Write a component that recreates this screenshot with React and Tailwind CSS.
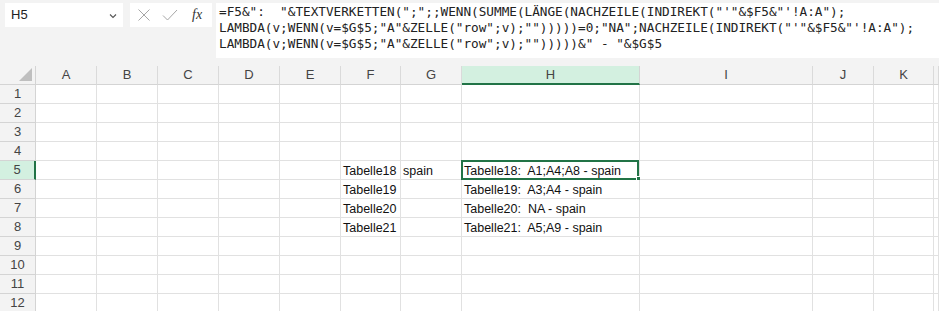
import React from "react";

const cols = ["A", "B", "C", "D", "E", "F", "G", "H", "I", "J", "K", ""];

const cells = {
  "F5": "Tabelle18",
  "G5": "spain",
  "H5": "Tabelle18:  A1;A4;A8 - spain",
  "F6": "Tabelle19",
  "H6": "Tabelle19:  A3;A4 - spain",
  "F7": "Tabelle20",
  "H7": "Tabelle20:  NA - spain",
  "F8": "Tabelle21",
  "H8": "Tabelle21:  A5;A9 - spain",
};

const FormulaBar = () => (
  <div className="h-[66px] bg-[#f3f3f3] flex items-start pt-[3px]">
    <div className="ml-[5px] w-[118px] h-[24px] bg-white flex items-center justify-between pl-[6px] pr-[6px] text-[13px] text-[#222]">
      <span>H5</span>
      <svg width="8" height="6" viewBox="0 0 8 6" className="mt-[1px]">
        <path d="M1 1.5 L4 4.5 L7 1.5" fill="none" stroke="#555" strokeWidth="1.1" />
      </svg>
    </div>
    <div className="ml-[7px] w-[82px] h-[24px] bg-white flex items-center pl-[7px]">
      <svg width="14" height="14" viewBox="0 0 14 14">
        <path d="M1.5 1.5 L12.5 12.5 M12.5 1.5 L1.5 12.5" stroke="#a6a6a6" strokeWidth="1" />
      </svg>
      <svg width="16" height="14" viewBox="0 0 16 14" className="ml-[11px]">
        <path d="M1 7.5 L5.5 12 L15 2" fill="none" stroke="#a6a6a6" strokeWidth="1" />
      </svg>
      <span className="ml-[14px] text-[14px] italic text-[#333] font-['Liberation_Serif',serif] leading-none">fx</span>
    </div>
    <div className="ml-[4px] flex-1 h-[55px] bg-white pl-[3px] pt-[1px] font-['DejaVu_Sans_Mono',monospace] text-[12.7px] leading-[16px] text-[#222] whitespace-pre overflow-hidden">
      <div>{'=F5&":  "&TEXTVERKETTEN(";";;WENN(SUMME(LÄNGE(NACHZEILE(INDIREKT("\'"&$F5&"\'!A:A");'}</div>
      <div>{'LAMBDA(v;WENN(v=$G$5;"A"&ZELLE("row";v);"")))))=0;"NA";NACHZEILE(INDIREKT("\'"&$F5&"\'!A:A");'}</div>
      <div>{'LAMBDA(v;WENN(v=$G$5;"A"&ZELLE("row";v);"")))))&" - "&$G$5'}</div>
    </div>
  </div>
);

const Sheet = () => {
  const rows = Array.from({ length: 12 }, (_, i) => i + 1);
  return (
    <div className="grid grid-cols-[36px_61px_61px_61px_61px_61px_60px_61px_178px_173px_61px_60px_1fr] auto-rows-[19px] text-[12.5px] font-['Liberation_Sans',Arial,sans-serif]">
      {/* corner */}
      <div className="bg-[#f3f3f3] border-r border-b border-[#d4d4d4] relative">
        <div className="absolute right-[3px] bottom-[3px] w-0 h-0 border-l-[13px] border-l-transparent border-b-[13px] border-b-[#bfbfbf]" />
      </div>
      {cols.map((c) =>
        c === "H" ? (
          <div key={c} className="bg-[#d3f0e0] border-r border-[#d4d4d4] border-b-2 border-b-[#217346] flex items-center justify-center text-[13px] text-[#444]">
            {c}
          </div>
        ) : (
          <div key={c || "L"} className="bg-[#f3f3f3] border-r border-b border-[#dadada] border-b-[#d4d4d4] flex items-center justify-center text-[13px] text-[#444]">
            {c}
          </div>
        )
      )}
      {rows.map((r) => (
        <React.Fragment key={r}>
          {r === 5 ? (
            <div className="bg-[#d3f0e0] border-r-2 border-r-[#217346] border-b border-b-[#d4d4d4] flex items-center justify-center text-[13px] text-[#444]">
              {r}
            </div>
          ) : (
            <div className="bg-[#f3f3f3] border-r border-b border-[#d4d4d4] flex items-center justify-center text-[13px] text-[#444]">
              {r}
            </div>
          )}
          {cols.map((c) => {
            const key = c + r;
            const val = cells[key];
            const selected = key === "H5";
            return (
              <div key={key || "L" + r} className="relative bg-white border-r border-b border-[#e1e1e1] flex items-end pl-[2px] pb-[1px] leading-[14px] text-[#111] whitespace-pre">
                {val}
                {selected && (
                  <>
                    <div className="absolute -left-[1px] -top-[1px] right-0 -bottom-[1px] border-2 border-[#217346]" />
                    <div className="absolute -right-[3px] -bottom-[3px] w-[6px] h-[6px] bg-[#217346] border border-white" />
                  </>
                )}
              </div>
            );
          })}
        </React.Fragment>
      ))}
    </div>
  );
}

export default function App() {
  return (
    <div className="w-[939px] h-[311px] overflow-hidden bg-white font-['Liberation_Sans',Arial,sans-serif]">
      <FormulaBar />
      <Sheet />
    </div>
  );
}
